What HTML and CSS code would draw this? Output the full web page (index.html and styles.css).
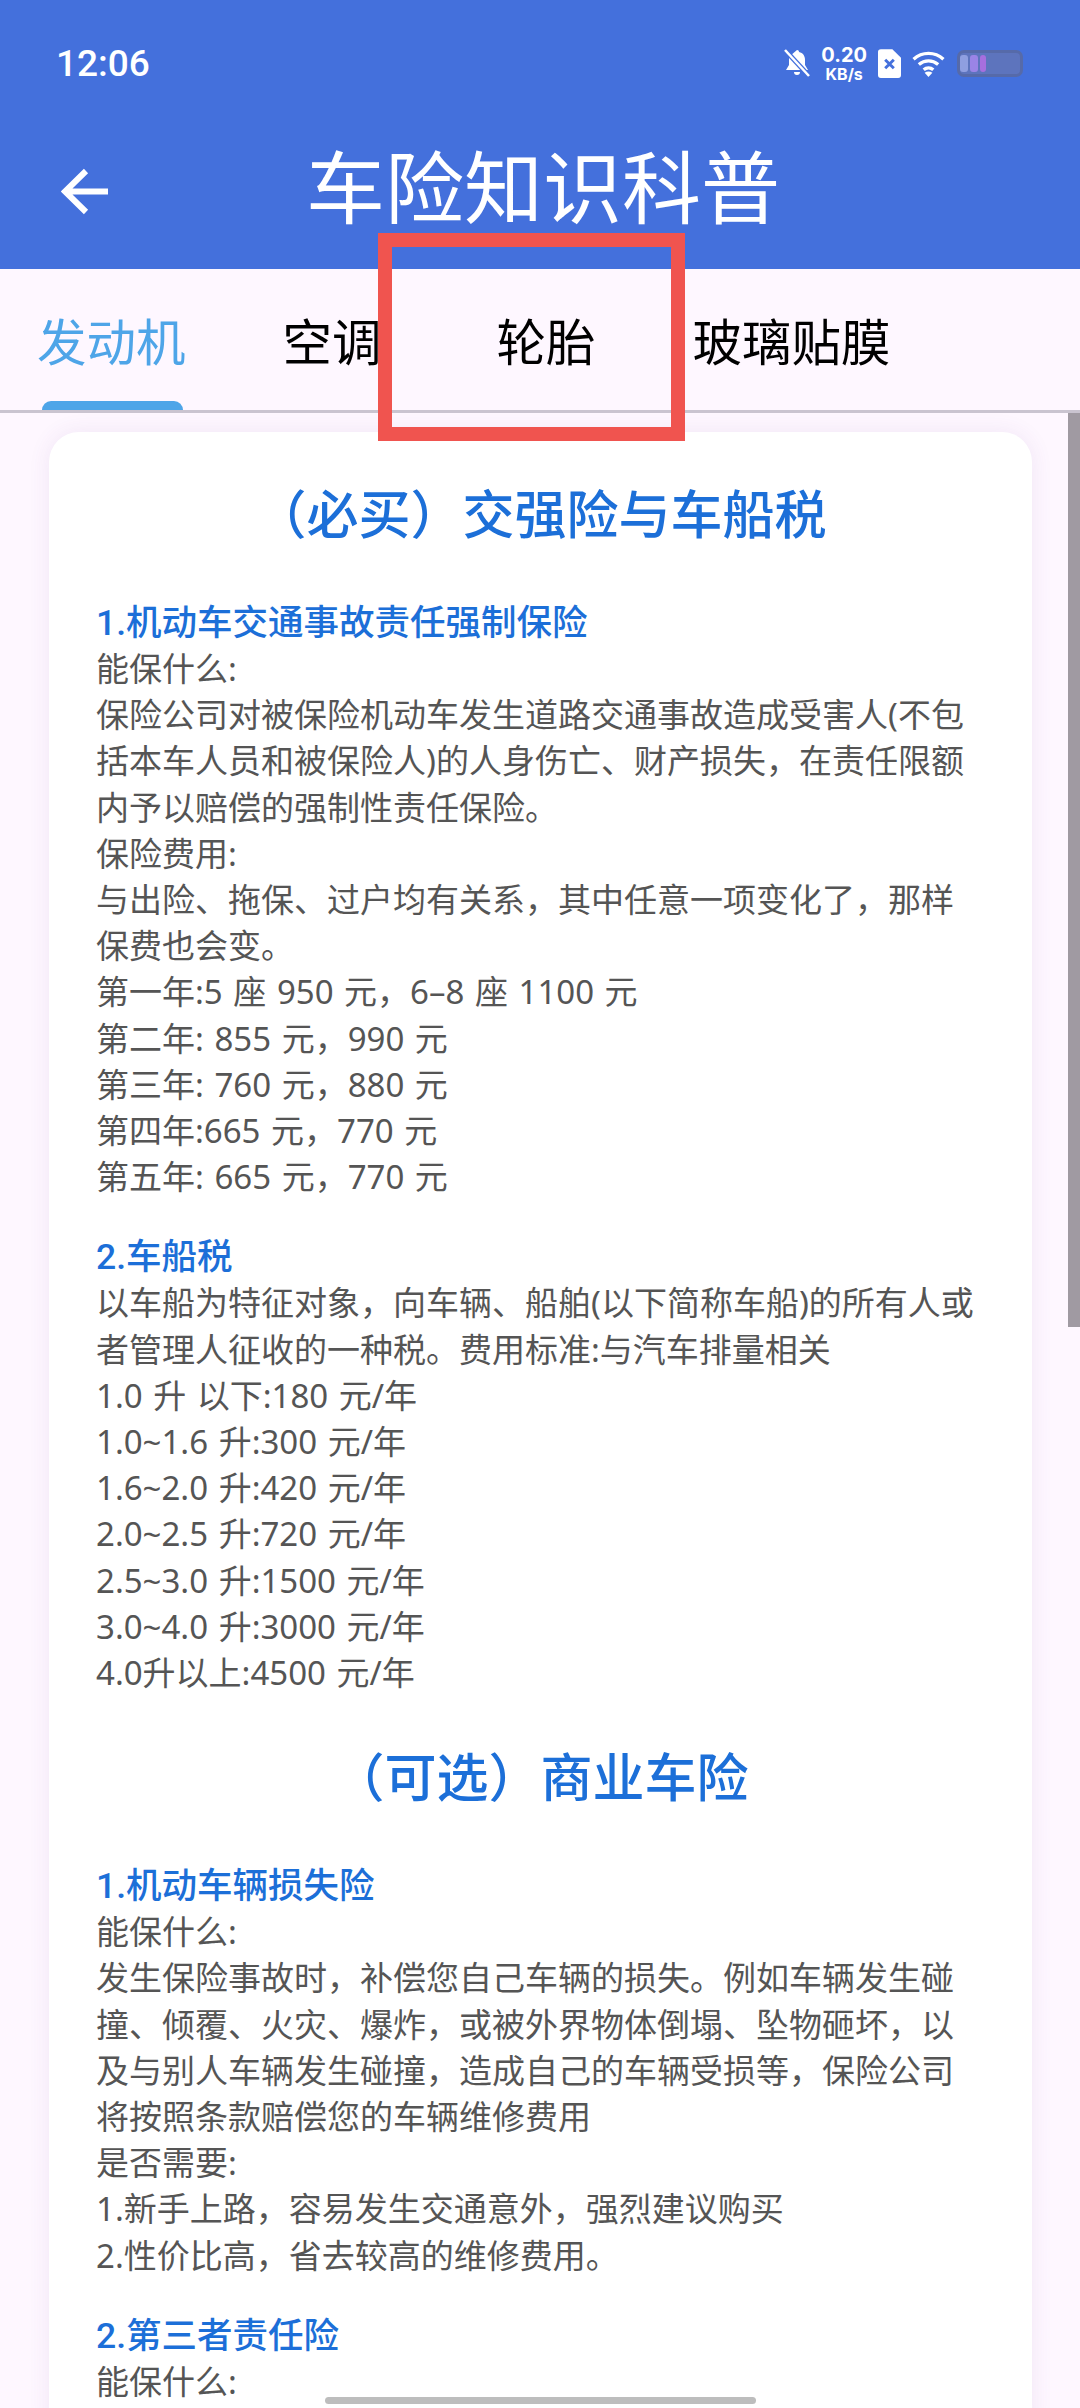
FILE: index.html
```html
<!DOCTYPE html>
<html lang="zh-CN">
<head>
    <meta charset="UTF-8">
    <meta name="viewport" content="width=device-width, initial-scale=1.0">
    <title>车险知识科普</title>
    <link rel="stylesheet" href="styles.css">
</head>
<body>
    <div class="screen">
        <header class="appbar">
            <div class="status">
                <span class="clock">12:06</span>
                <div class="status-icons">
                    <svg class="icon-bell" viewBox="0 0 26 28" width="26" height="28">
                        <path fill="#fff" d="M13 1c1.300 0 2 .8 2 1.900 4 .9 6 4 6 8v5l3 5.100H2l3-5.100v-5c0-1.300.2-2.500.7-3.600zM10 23h6a3 3 0 0 1-6 0z"/>
                        <path stroke="#4470dc" stroke-width="5" d="M1 1l24 26"/>
                        <path stroke="#fff" stroke-width="2.500" d="M1 1l24 26"/>
                    </svg>
                    <div class="speed"><span>0.20</span><span class="speed-unit">KB/s</span></div>
                    <svg class="icon-sim" viewBox="0 0 24 30" width="23" height="29">
                        <path fill="#fff" d="M3 0h12l9 9v18a3 3 0 0 1-3 3H3a3 3 0 0 1-3-3V3a3 3 0 0 1 3-3z"/>
                        <path stroke="#4470dc" stroke-width="3" d="M7.500 11l9 9M16.500 11l-9 9"/>
                    </svg>
                    <svg class="icon-wifi" viewBox="0 0 34 28" width="33" height="27" fill="none" stroke="#fff" stroke-width="3.500">
                        <path d="M1.500 9.500c9-8 22-8 31 0"/>
                        <path d="M7 15c6-5 14-5 20 0"/>
                        <path d="M12 20.500c3-2.500 7-2.500 10 0"/>
                        <path fill="#fff" stroke="none" d="M17 28l-4-4.500c2.500-1.500 5.500-1.500 8 0z"/>
                    </svg>
                    <div class="battery">
                        <i class="cell cell-a"></i><i class="cell cell-b"></i><i class="cell cell-c"></i>
                    </div>
                </div>
            </div>
            <div class="titlebar">
                <svg class="back" viewBox="0 0 47 47" width="47" height="47" fill="none" stroke="#fff" stroke-width="6">
                    <path d="M47 23.500H4M25 3L4 23.500 25 44"/>
                </svg>
                <h1>车险知识科普</h1>
            </div>
        </header>

        <nav class="tabs">
            <a class="tab tab-active">发动机</a>
            <a class="tab tab-air">空调</a>
            <a class="tab tab-tyre">轮胎</a>
            <a class="tab tab-film">玻璃贴膜</a>
            <span class="highlight"></span>
        </nav>

        <main class="scroller">
            <article class="card">
                <h2 class="first">（必买）交强险与车船税</h2>

                <h3>1.机动车交通事故责任强制保险</h3>
                <p>能保什么:</p>
                <p>保险公司对被保险机动车发生道路交通事故造成受害人(不包括本车人员和被保险人)的人身伤亡、财产损失，在责任限额内予以赔偿的强制性责任保险。</p>
                <p>保险费用:</p>
                <p>与出险、拖保、过户均有关系，其中任意一项变化了，那样保费也会变。</p>
                <p>第一年:5 座 950 元，6–8 座 1100 元</p>
                <p>第二年: 855 元，990 元</p>
                <p>第三年: 760 元，880 元</p>
                <p>第四年:665 元，770 元</p>
                <p>第五年: 665 元，770 元</p>

                <h3>2.车船税</h3>
                <p>以车船为特征对象，向车辆、船舶(以下简称车船)的所有人或者管理人征收的一种税。费用标准:与汽车排量相关</p>
                <p>1.0 升 以下:180 元/年</p>
                <p>1.0~1.6 升:300 元/年</p>
                <p>1.6~2.0 升:420 元/年</p>
                <p>2.0~2.5 升:720 元/年</p>
                <p>2.5~3.0 升:1500 元/年</p>
                <p>3.0~4.0 升:3000 元/年</p>
                <p>4.0升以上:4500 元/年</p>

                <h2>（可选）商业车险</h2>

                <h3>1.机动车辆损失险</h3>
                <p>能保什么:</p>
                <p>发生保险事故时，补偿您自己车辆的损失。例如车辆发生碰撞、倾覆、火灾、爆炸，或被外界物体倒塌、坠物砸坏，以及与别人车辆发生碰撞，造成自己的车辆受损等，保险公司将按照条款赔偿您的车辆维修费用</p>
                <p>是否需要:</p>
                <p>1.新手上路，容易发生交通意外，强烈建议购买</p>
                <p>2.性价比高，省去较高的维修费用。</p>

                <h3>2.第三者责任险</h3>
                <p>能保什么:</p>
            </article>
            <div class="scrollbar"></div>
        </main>
        <div class="home-bar"></div>
    </div>
</body>
</html>
```
FILE: styles.css
```css
* {
    box-sizing: border-box;
}
html, body {
    margin: 0;
    padding: 0;
}
body {
    font-family: Roboto, "Noto Sans CJK SC", sans-serif;
    background-color: #fef7ff;
}
.screen {
    position: relative;
    width: 1080px;
    height: 2408px;
    overflow: hidden;
    display: flex;
    flex-direction: column;
}

/* top blue area */
.appbar {
    height: 269px;
    background-color: #4470dc;
    color: white;
    flex-shrink: 0;
}
.status {
    display: flex;
    justify-content: space-between;
    align-items: center;
    height: 62px;
    margin-top: 32px;
    padding: 0 57px 0 56px;
}
.clock {
    font-size: 37px;
    font-weight: 500;
}
.status-icons {
    display: flex;
    align-items: center;
    gap: 11px;
}
.speed {
    display: flex;
    flex-direction: column;
    align-items: center;
    font-family: "Inter", sans-serif;
    font-size: 20px;
    font-weight: 700;
    line-height: 21px;
}
.speed-unit {
    font-size: 16px;
    line-height: 16px;
}
.battery {
    display: flex;
    gap: 2px;
    width: 66px;
    height: 27px;
    margin-left: 1px;
    padding: 2px 0;
    border: 3px solid #566aa9;
    border-radius: 7px;
    background-color: #5d74bd;
}
.cell {
    width: 8px;
    border-radius: 3px;
}
.cell-a { background-color: #8f9fe0; }
.cell-b { background-color: #9a84e6; }
.cell-c { width: 6px; background-color: #a66fde; }

.titlebar {
    display: flex;
    align-items: center;
    justify-content: center;
    position: relative;
    height: 110px;
    margin-top: 35px;
}
.titlebar h1 {
    margin: 0 0 0 6px;
    font-family: "Noto Sans CJK SC", sans-serif;
    font-size: 79px;
    font-weight: 400;
    line-height: 110px;
}
.back {
    position: absolute;
    left: 61px;
    top: 39px;
}

/* tabs */
.tabs {
    position: relative;
    display: flex;
    height: 144px;
    flex-shrink: 0;
    padding-left: 37px;
    border-bottom: 3px solid #cac4d0;
    background-color: #fef7ff;
}
.tab {
    padding-top: 6px;
    font-size: 49.500px;
    line-height: 138px;
    color: #000;
    white-space: nowrap;
}
.tab-active {
    position: relative;
    color: #4ea5e8;
}
.tab-active::after {
    content: "";
    position: absolute;
    left: 5px;
    right: 3px;
    bottom: 0;
    height: 9px;
    border-radius: 9px 9px 0 0;
    background-color: #4ea5e8;
}
.tab-air { margin-left: 97px; }
.tab-tyre { margin-left: 115px; }
.tab-film { margin-left: 97px; }

.highlight {
    position: absolute;
    z-index: 2;
    left: 378px;
    top: -36px;
    width: 307px;
    height: 208px;
    border: 14px solid #f0544f;
}

/* scrolling content */
.scroller {
    position: relative;
    flex: 1;
    min-height: 0;
    padding: 19px 48px 0 49px;
}
.card {
    padding: 0 47px 40px;
    border-radius: 30px;
    background-color: white;
    box-shadow: 0 0 22px rgba(100, 60, 140, 0.09);
}
.card h2 {
    margin: 0;
    padding-top: 51px;
    color: #1c6fd8;
    font-size: 52px;
    font-weight: 500;
    line-height: 66px;
    text-align: center;
}
.card h2.first {
    padding-top: 52px;
}
.card h3 {
    margin: 34px 0 0;
    color: #1c6fd8;
    font-size: 35.500px;
    font-weight: 500;
    line-height: 46px;
}
.card h2 + h3 {
    margin-top: 50px;
}
.card p {
    margin: 0;
    color: #555;
    font-family: "Noto Sans", "Noto Sans CJK SC", sans-serif;
    font-size: 33px;
    line-height: 46.200px;
    word-spacing: 2px;
}
.scrollbar {
    position: absolute;
    top: 0;
    right: 0;
    width: 12px;
    height: 914px;
    background-color: #a09aa2;
}
.home-bar {
    position: absolute;
    left: 325px;
    bottom: 4px;
    width: 431px;
    height: 7px;
    border-radius: 4px;
    background-color: #bdbdbd;
}
```
